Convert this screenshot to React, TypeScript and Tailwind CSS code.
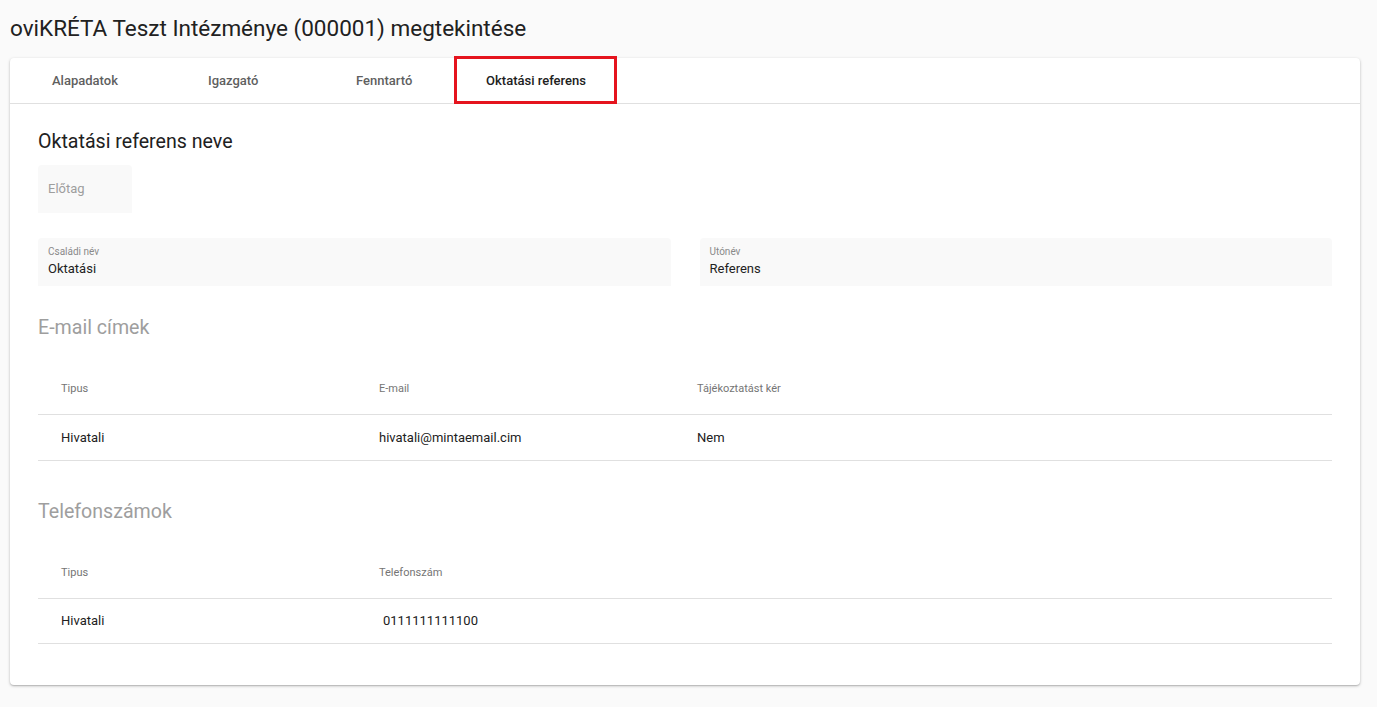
import React from 'react';

const tabs = [
  { label: 'Alapadatok', w: 'w-[145px]', pl: 'pl-[42px]' },
  { label: 'Igazgató', w: 'w-[145px]', pl: 'pl-[53px]' },
  { label: 'Fenntartó', w: 'w-[155px]', pl: 'pl-[56px]' },
];

const Field = ({ label, value }: { label: string; value: string }) => (
  <div className="flex-1 h-12 bg-[#f9f9f9] rounded-t px-[10px] pt-[8px]">
    <div className="text-[10px] leading-[12px] text-[#8a8a8a]">{label}</div>
    <div className="text-[13px] leading-[20px] text-[#222] mt-[1px]">{value}</div>
  </div>
);

const App: React.FC = () => {
  return (
    <div className="min-h-[707px] bg-[#fafafa] px-[10px] pt-[12px] pb-[22px]" style={{ fontFamily: 'Roboto, "Noto Sans", sans-serif' }}>
      <h1 className="text-[22.5px] leading-[32px] text-[#212121] font-normal">
        oviKRÉTA Teszt Intézménye (000001) megtekintése
      </h1>

      <div className="mt-[14px] w-[1350px] bg-white rounded shadow-[0_1px_3px_rgba(0,0,0,0.25),0_1px_1px_rgba(0,0,0,0.1)]">
        {/* tabs */}
        <div className="flex h-[46px] border-b border-[#e0e0e0]">
          {tabs.map((t) => (
            <div key={t.label} className={`${t.w} ${t.pl} flex items-center text-[13px] font-medium text-[#5f5f5f]`}>
              {t.label}
            </div>
          ))}
          <div className="relative w-[162px] flex items-center justify-center text-[13px] font-medium text-[#212121]">
            Oktatási referens
            <div className="absolute left-[-1px] right-0 top-[-2px] bottom-[-1px] border-[3px] border-[#e5141e]" />
          </div>
        </div>

        <div className="px-[28px] pt-[24px] pb-[41px]">
          <h2 className="text-[19.6px] leading-[28px] text-[#212121]">Oktatási referens neve</h2>

          <div className="mt-[9px] w-[94px] h-12 bg-[#f9f9f9] rounded-t flex items-center pl-[10px] text-[13px] text-[#9e9e9e]">
            Előtag
          </div>

          <div className="mt-[25px] flex gap-[29px]">
            <Field label="Családi név" value="Oktatási" />
            <Field label="Utónév" value="Referens" />
          </div>

          <h2 className="mt-[28px] text-[19.6px] leading-[28px] text-[#9e9e9e]">E-mail címek</h2>

          <div className="mt-[23px]">
            <div className="flex h-[50px] items-center border-b border-[#e0e0e0] text-[11px] text-[#757575]">
              <div className="w-[341px] pl-[23px]">Tipus</div>
              <div className="w-[318px]">E-mail</div>
              <div>Tájékoztatást kér</div>
            </div>
            <div className="flex h-[46px] items-center border-b border-[#e0e0e0] text-[13px] text-[#212121]">
              <div className="w-[341px] pl-[23px]">Hivatali</div>
              <div className="w-[318px]">hivatali@mintaemail.cim</div>
              <div>Nem</div>
            </div>
          </div>

          <h2 className="mt-[37px] text-[19.6px] leading-[28px] text-[#9e9e9e]">Telefonszámok</h2>

          <div className="mt-[23px]">
            <div className="flex h-[50px] items-center border-b border-[#e0e0e0] text-[11px] text-[#757575]">
              <div className="w-[341px] pl-[23px]">Tipus</div>
              <div>Telefonszám</div>
            </div>
            <div className="flex h-[45px] items-center border-b border-[#e0e0e0] text-[13px] text-[#212121]">
              <div className="w-[341px] pl-[23px]">Hivatali</div>
              <div className="pl-[4px]">0111111111100</div>
            </div>
          </div>
        </div>
      </div>
    </div>
  );
};

export default App;
